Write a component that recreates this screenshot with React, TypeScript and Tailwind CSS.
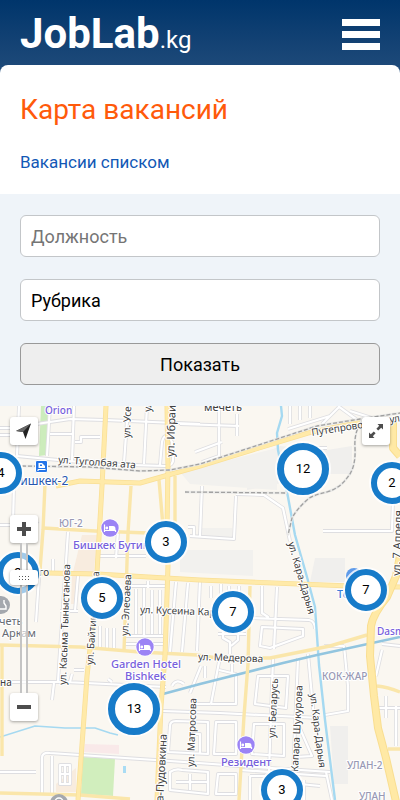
import { useState } from "react";

type Cluster = { id: string; count: number; x: number; y: number; big?: boolean };

const MAP_WIDTH = 400;
const MAP_HEIGHT = 394;

const clusters: Cluster[] = [
  { id: "west", count: 4, x: 1, y: 67 },
  { id: "slider", count: 3, x: 18, y: 167 },
  { id: "butin", count: 3, x: 166, y: 136 },
  { id: "baitik", count: 5, x: 102, y: 192 },
  { id: "kusein", count: 7, x: 233, y: 206 },
  { id: "north", count: 12, x: 303, y: 63, big: true },
  { id: "april", count: 2, x: 392, y: 77 },
  { id: "east", count: 7, x: 366, y: 184 },
  { id: "garden", count: 13, x: 134, y: 303, big: true },
  { id: "south", count: 3, x: 282, y: 384 },
];

const minorRoads = [
  "M0 22 H10 L70 13 L105 14 L200 18",
  "M19 0 L17 50 M50 0 L47 50 M74 0 L72 55 M0 29 H36 M50 28 H74",
  "M17 50 L100 58 L165 60 Q174 60 173 52 L172 36 Q165 24 162 36 L160 59",
  "M75 36 H81 V31 H100 M127 15 L124 57 M147 0 L144 58",
  "M14 77 L13 118 M38 115 L33 120 M0 119 H10",
  "M68 126 L58 275 M40 157 L36 216 M53 153 V166",
  "M60 205 H78 M97 150 H146 M118 125 L116 152",
  "M128 180 H165 M144 182 V230 M152 184 V228 M160 184 V228 M124 230 H163 M124 238 H163 M136 183 V228",
  "M100 220 V242 M107 222 V242 M114 222 V242 M78 170 L75 205",
  "M200 174 L197 245 M211 180 V192 M221 178 V190 M229 180 V188 M239 180 V190 M148 175 V182",
  "M176 176 L170 246 M188 177 L182 246",
  "M262 180 V207 L268 211 V212 M277 181 L274 243 M250 212 L309 214 Q315 215 315 223",
  "M262 221 L303 223 V230 L270 242 L260 240 Z",
  "M218 228 H246 M223 226 V232 L230 236 V248 M238 226 V234 L231 240",
  "M195 46 L222 36 M219 22 V50 L202 56 M180 18 L239 20 M237 8 V30 M219 2 V24",
  "M288 23 L330 10 M290 0 V18 M300 0 V14 M310 0 V12 M322 18 L340 0 M338 0 L360 16",
  "M350 5 L372 12 M190 130 L234 133 L236 90 M202 80 L200 130",
  "M188 121 H194 V130",
  "M236 88 L264 89 L283 102 L290 135",
  "M323 125 H392 L394 60 M302 36 V42 H327",
  "M344 240 L348 280 V305 L325 309",
  "M324 240 H344",
  "M382 238 L400 240 M382 244 L376 270",
  "M0 276 L66 276 L166 281 M54 277 L52 294 M72 268 L70 276 M108 273 L112 276 M74 264 H84",
  "M163 305 L220 307 L320 312 M172 280 Q176 272 184 278 M201 260 L190 287",
  "M42 388 V352 Q42 346 50 347 L80 349 L170 355 L240 360 L330 366",
  "M52 350 V388 M60 359 H70 V378 H60 Z M65 359 V378 M60 368 H70",
  "M170 320 Q170 315 176 315 L208 316 V348 L168 346 Z M190 328 H200 V348",
  "M170 366 Q176 362 182 364 L208 366 V388 L170 384 Z M190 368 V384 M176 376 H208",
  "M219 256 L211 298 H236 V268 L219 264 M205 260 V272 M196 298 H210 M232 258 V268",
  "M216 316 H236 V348 H214 Z M218 368 H236 V388 H216 Z",
  "M258 270 L255 298 L286 302 L288 270 Z M273 252 L268 394",
  "M298 252 L292 394 M308 248 L314 312 M254 318 H284 V350 L252 348 Z",
  "M298 318 L312 350 L296 351 M240 364 L326 370 M250 370 H268 M250 370 L250 394 M304 374 V394",
  "M326 366 L332 394 M300 378 L320 380",
  "M378 302 H400 M386 290 V312 M396 300 V340",
  "M0 203 H8 M0 366 H36",
];

const thinYellow = [
  "M45 78 L43 124 L40 164",
  "M43 122 L95 125 L148 127",
  "M131 80 L128 127 L124 245",
  "M0 239 L80 241 L140 246 L197 249 Q220 253 236 252 L270 252 L330 240 L367 229",
  "M250 180 L248 258 L244 310 L239 394",
  "M2 240 V350",
  "M0 387 L80 389 L130 393",
  "M377 280 Q388 281 400 286 M388 343 H400",
  "M159 74 L163 120 M175 70 V118",
];

const wideYellow = [
  "M106 0 L102 80 L97 166 L91 234 L87 270 L78 394",
  "M56 80 L80 75 L140 77 L200 60 L308 27 L360 16",
  "M167 0 L168 60 L167 120 L168 160 L165 250 L161 300 L157 394",
  "M0 166 L97 168 L200 174 L350 180 L400 181",
];

const mainAvenue =
  "M393 16 V42 L400 50 M400 150 L396 170 L387 191 Q373 208 371 220 L370 250 L374 290 L378 322 L386 352 L397 400";

const railways =
  "M22 60 L90 61 L140 65 L170 64 L200 58 L317 20 L360 13 L400 7 M185 86 L287 87 M360 18 Q354 28 355 42 Q356 62 347 72 Q340 82 327 86 Q312 89 307 94 Q296 104 292 112 L288 129";

type Label = { text: string; x: number; y: number; angle?: number; tone?: string; size?: number };

const labels: Label[] = [
  { text: "ул. Туголбая ата", x: 58, y: 57, angle: 4 },
  { text: "Путепровод", x: 312, y: 30, angle: -9 },
  { text: "ул.", x: 390, y: 17, angle: -9 },
  { text: "мечеть", x: 204, y: 5, size: 11 },
  { text: "ул. Усенбаева", x: 130, y: 32, angle: -88 },
  { text: "ул.", x: 151, y: 6, angle: -88 },
  { text: "ул. Ибраимова", x: 174, y: 51, angle: -88, size: 11 },
  { text: "ул. Кусеина Кар", x: 140, y: 207, angle: 2 },
  { text: "ул. Медерова", x: 198, y: 254, angle: 2 },
  { text: "ул. Касыма Тыныстанова", x: 66, y: 279, angle: -88 },
  { text: "ул. Байтик", x: 93, y: 259, angle: -86 },
  { text: "а", x: 99, y: 171, angle: -86 },
  { text: "ул. Элебаева", x: 128, y: 230, angle: -87 },
  { text: "го", x: 39, y: 170 },
  { text: "на", x: 0, y: 280 },
  { text: "ул. Кара-Дарыя", x: 288, y: 137, angle: 74 },
  { text: "ул. Кара-Дарыя", x: 310, y: 288, angle: 83 },
  { text: "ул. 7 Апреля", x: 400, y: 170, angle: -88, size: 11 },
  { text: "ул. Матросова", x: 194, y: 361, angle: -88 },
  { text: "ва-Пудовкина", x: 163, y: 402, angle: -87, size: 11 },
  { text: "ул. Беларусь", x: 275, y: 332, angle: -87 },
  { text: "Капара Шукурова", x: 298, y: 366, angle: -87 },
  { text: "Orion", x: 45, y: 8, tone: "purple" },
  { text: "Бишкек-2", x: 13, y: 79, tone: "blue", size: 12 },
  { text: "Бишкек Бутик", x: 73, y: 143, tone: "purple", size: 11 },
  { text: "Garden Hotel", x: 111, y: 262, tone: "purple", size: 11 },
  { text: "Bishkek", x: 125, y: 274, tone: "purple", size: 11 },
  { text: "Резидент", x: 221, y: 360, tone: "purple", size: 11 },
  { text: "Dasmia", x: 377, y: 229, tone: "purple" },
  { text: "То", x: 337, y: 192, tone: "sky", size: 11 },
  { text: "ЮГ-2", x: 59, y: 121, tone: "district" },
  { text: "КОК-ЖАР", x: 322, y: 274, tone: "district" },
  { text: "УЛАН-2", x: 347, y: 363, tone: "district" },
  { text: "УЛАН", x: 359, y: 394, tone: "district" },
  { text: "четь", x: -1, y: 219, tone: "gray", size: 11 },
  { text: "Аркам", x: 2, y: 231, tone: "gray", size: 11 },
];

const toneClasses: Record<string, string> = {
  street: "fill-[#404040]",
  purple: "fill-[#7760dc] font-medium",
  blue: "fill-[#2756ae]",
  sky: "fill-[#3b80d8] font-medium",
  district: "fill-[#9899b4] font-medium",
  gray: "fill-[#666b73]",
};

function HotelPin({ x, y }: { x: number; y: number }) {
  return (
    <g transform={`translate(${x} ${y})`}>
      <circle r="9.5" fill="#fff" />
      <circle r="8.7" fill="#9b83f5" />
      <path d="M-5.5 -3.5 V4 M-5.5 2.5 H5.5 V4" stroke="#fff" strokeWidth="1.2" fill="none" />
      <path d="M-1 -2 H3 Q5.5 -2 5.5 1 V2 H-1 Z" fill="#fff" />
      <circle cx="-3.2" cy="0" r="1.4" fill="#fff" />
    </g>
  );
}

function MapCanvas() {
  return (
    <svg
      viewBox={`0 0 ${MAP_WIDTH} ${MAP_HEIGHT}`}
      preserveAspectRatio="xMidYMin slice"
      className="absolute inset-0 size-full"
      aria-label="Карта"
    >
      <rect width="400" height="394" fill="#faf7f1" />
      <path d="M247 56 L280 40 L327 44 L352 40 V68 L327 68 L247 84 Z" fill="#f0efed" />
      <path d="M180 66 L277 42 V84 L190 78 Z M180 144 H253 V170 L180 166 Z M200 122 H232 V131 L200 129 Z" fill="#f2f1ee" />
      <path d="M315 152 H345 V176 H310 Z M330 320 H348 V378 H334 Z" fill="#f0efed" />
      <path d="M82 129 H97 L94 166 H73 Z M72 170 H80 L76 198 H71 Z M56 378 L76 362 V386 H56 Z" fill="#f8ecdf" />
      <path d="M41 0 H48 L47 49 L39 50 Z" fill="#ccecbc" />
      <path d="M83 351 L115 353 L113 390 L81 388 Z" fill="#d1eebd" />
      <path d="M85 338 L119 339 V348 L84 346 Z" fill="#f9e9e9" />
      <rect x="123" y="360" width="3" height="7" fill="#a9dcf4" />

      <g fill="none" strokeLinejoin="round">
        {minorRoads.map((d) => (
          <path key={d} d={d} stroke="#dedee1" strokeWidth="3.8" />
        ))}
        {minorRoads.map((d) => (
          <path key={d} d={d} stroke="#fff" strokeWidth="2.2" />
        ))}
        <path
          d="M281 0 L282 10 L277 27 L278 44 L288 91 L295 129 L307 171 L315 201 L319 259 L325 314 L335 394"
          stroke="#a5d9f1"
          strokeWidth="2.4"
        />
        <path d="M0 331 L35 320 L65 322 L95 322 L110 327 L118 329" stroke="#a5d9f1" strokeWidth="1.5" />
        <path d="M163 288 L200 278 L283 257 L317 249 L400 231" stroke="#92c5df" strokeWidth="2.6" />

        {thinYellow.map((d) => (
          <path key={d} d={d} stroke="#fae6aa" strokeWidth="3.4" />
        ))}
        {wideYellow.map((d) => (
          <path key={d} d={d} stroke="#f9df96" strokeWidth="5" />
        ))}
        {wideYellow.map((d) => (
          <path key={d} d={d} stroke="#ffeaa9" strokeWidth="3.6" />
        ))}
        <path d={mainAvenue} stroke="#f9de91" strokeWidth="8" />
        <path d={mainAvenue} stroke="#ffe9a5" strokeWidth="6" />
        <path d={railways} stroke="#e9e9e7" strokeWidth="2.4" />
        <path d={railways} stroke="#a1a1a1" strokeWidth="1.3" strokeDasharray="4 2" />
      </g>

      <HotelPin x={110} y={122} />
      <HotelPin x={145} y={241} />
      <HotelPin x={246} y={339} />
      <circle cx="1" cy="199" r="9" fill="#a4a8ae" />
      <path d="M-4 203 H6 V200 L4 197 V194 M-2 203 V197" stroke="#fff" strokeWidth="1.4" fill="none" />
      <circle cx="59" cy="397" r="9" fill="#a4a8ae" />
      <circle cx="59" cy="396" r="4" fill="none" stroke="#fff" strokeWidth="1.5" />
      <circle cx="354" cy="170" r="8" fill="#5f9bea" />
      <rect x="35.5" y="54.5" width="12" height="12" rx="1.5" fill="#2474e8" stroke="#fff" />
      <path d="M38 63.5 H45.5 M38 65 V63.5" stroke="#fff" strokeWidth="1.2" fill="none" />
      <path d="M38.5 57 H42 L45 60 V62 H38.5 Z" fill="#fff" />
      <rect x="40" y="58.5" width="2" height="1.5" fill="#2474e8" />

      <g
        className="font-['Noto_Sans',sans-serif]"
        stroke="#fff"
        strokeWidth="2"
        strokeLinejoin="round"
        paintOrder="stroke"
      >
        {labels.map(({ text, x, y, angle = 0, tone = "street", size = 10 }) => (
          <text
            key={`${text}-${x}`}
            transform={`translate(${x} ${y}) rotate(${angle})`}
            fontSize={size}
            className={toneClasses[tone]}
          >
            {text}
          </text>
        ))}
      </g>
    </svg>
  );
}

function ClusterMarker({ count, x, y, big }: Cluster) {
  return (
    <button
      type="button"
      aria-label={`Вакансий: ${count}`}
      style={{ left: `${(x / MAP_WIDTH) * 100}%`, top: `${(y / MAP_HEIGHT) * 100}%` }}
      className={`absolute flex -translate-x-1/2 -translate-y-1/2 items-center justify-center rounded-full border-[#177bc9] bg-white text-[13px] text-black ring-2 ring-white/80 ${
        big ? "size-[52px] border-[7px]" : "size-[42px] border-[6px]"
      }`}
    >
      {count}
    </button>
  );
}

const controlClasses =
  "flex size-7 items-center justify-center rounded-[3px] bg-white text-[#4d4d4d] shadow-[0_1px_3px_rgba(0,0,0,0.35)]";

function VacancyMap() {
  const [zoom, setZoom] = useState(80);

  return (
    <section className="relative min-h-[394px] flex-1 overflow-hidden bg-[#faf7f1]" aria-label="Вакансии на карте">
      <MapCanvas />
      {clusters.map((cluster) => (
        <ClusterMarker key={cluster.id} {...cluster} />
      ))}

      <div className="absolute inset-x-2.5 top-[11px] flex justify-between">
        <button type="button" aria-label="Моё местоположение" className={controlClasses}>
          <svg viewBox="0 0 28 28" className="size-7">
            <path d="M21 6.5 L6 14 L13 15 L15.5 22 Z" fill="#222" />
            <path d="M21 6.5 L13 15 L6 14 Z" fill="#666" />
          </svg>
        </button>
        <button type="button" aria-label="На весь экран" className={controlClasses}>
          <svg viewBox="0 0 28 28" className="size-7" fill="currentColor">
            <path d="M15.5 7 H21 V12.5 L19.2 10.8 L16.2 13.6 L14.4 11.8 L17.2 8.8 Z" />
            <path d="M12.5 21 H7 V15.5 L8.8 17.2 L11.8 14.4 L13.6 16.2 L10.8 19.2 Z" />
          </svg>
        </button>
      </div>

      <div className="absolute top-[109px] left-2.5 flex flex-col items-center">
        <button
          type="button"
          aria-label="Приблизить"
          onClick={() => setZoom(Math.min(100, zoom + 5))}
          className={controlClasses}
        >
          <svg viewBox="0 0 28 28" className="size-7" fill="currentColor">
            <path d="M12 7 H16 V12 H21 V16 H16 V21 H12 V16 H7 V12 H12 Z" />
          </svg>
        </button>
        <div className="relative flex h-[150px] w-7 justify-center">
          <div className="h-full w-2 border-x-2 border-[#c4c4c4] bg-white/60" />
          <input
            type="range"
            aria-label="Масштаб"
            value={zoom}
            onChange={(e) => setZoom(Number(e.target.value))}
            className="absolute inset-0 m-0 h-full w-7 appearance-none bg-transparent [direction:rtl] [writing-mode:vertical-lr] [&::-webkit-slider-thumb]:h-[15px] [&::-webkit-slider-thumb]:w-7 [&::-webkit-slider-thumb]:appearance-none [&::-webkit-slider-thumb]:rounded-[3px] [&::-webkit-slider-thumb]:bg-white [&::-webkit-slider-thumb]:shadow-[0_1px_3px_rgba(0,0,0,0.35)]"
          />
          <svg
            viewBox="0 0 28 15"
            style={{ bottom: `${(zoom / 100) * 135}px` }}
            className="pointer-events-none absolute left-0 w-7"
            fill="#555"
          >
            {[9, 12, 15, 18].map((x) => (
              <path key={x} d={`M${x} 6 h1 v1 h-1 Z M${x} 9 h1 v1 h-1 Z`} />
            ))}
          </svg>
        </div>
        <button
          type="button"
          aria-label="Отдалить"
          onClick={() => setZoom(Math.max(0, zoom - 5))}
          className={controlClasses}
        >
          <svg viewBox="0 0 28 28" className="size-7" fill="currentColor">
            <path d="M7 12 H21 V16 H7 Z" />
          </svg>
        </button>
      </div>
    </section>
  );
}

const fieldClasses = "h-[42px] w-full rounded-md border px-2.5 text-[18px]";

export default function App() {
  return (
    <div className="flex min-h-screen flex-col bg-[#eff4f9] font-['Roboto',sans-serif] text-black">
      <div className="bg-linear-to-b from-[#00356b] to-[#1f4b7a] to-[72px]">
        <header className="flex h-[65px] items-center justify-between px-5 pt-1">
          <a href="#" className="pt-1 text-[42px] leading-[65px] font-bold text-white">
            JobLab<span className="text-[24px] font-normal">.kg</span>
          </a>
          <button type="button" aria-label="Меню" className="flex w-[38px] flex-col gap-[5px]">
            <span className="h-[7px] bg-white" />
            <span className="h-[7px] bg-white" />
            <span className="h-[7px] bg-white" />
          </button>
        </header>
        <div className="rounded-t-lg bg-white px-5 pt-[25px] pb-5">
          <h1 className="text-[28px] leading-10 text-[#ff5a0a]">Карта вакансий</h1>
          <a href="#" className="mt-5 block text-[17px] leading-6 text-[#1258b5]">
            Вакансии списком
          </a>
        </div>
      </div>

      <form className="flex flex-col gap-[22px] px-5 py-[21px]" onSubmit={(e) => e.preventDefault()}>
        <input
          type="text"
          aria-label="Должность"
          placeholder="Должность"
          className={`${fieldClasses} border-[#c3c6c9] bg-white placeholder:text-[#757575]`}
        />
        <select aria-label="Рубрика" className={`${fieldClasses} appearance-none border-[#c3c6c9] bg-white`}>
          <option>Рубрика</option>
        </select>
        <button type="submit" className={`${fieldClasses} border-[#999] bg-[#eee]`}>
          Показать
        </button>
      </form>

      <VacancyMap />
    </div>
  );
}
